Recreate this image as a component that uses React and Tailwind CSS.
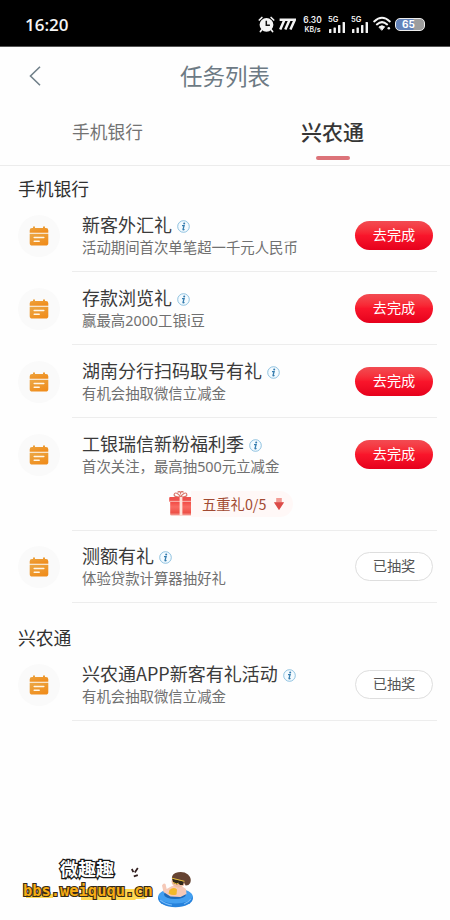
import React from "react";

const MOBILE_TASKS = [
  { title: "新客外汇礼", desc: "活动期间首次单笔超一千元人民币", done: false },
  { title: "存款浏览礼", desc: "赢最高2000工银i豆", done: false },
  { title: "湖南分行扫码取号有礼", desc: "有机会抽取微信立减金", done: false },
  { title: "工银瑞信新粉福利季", desc: "首次关注，最高抽500元立减金", done: false, gift: true },
  { title: "测额有礼", desc: "体验贷款计算器抽好礼", done: true },
];

const XNT_TASKS = [{ title: "兴农通APP新客有礼活动", desc: "有机会抽取微信立减金", done: true }];

function Signal() {
  return (
    <div className="flex h-[17px] w-[18px] flex-col">
      <span className="h-[6px] text-[7.5px] font-semibold leading-[8px]">5G</span>
      <svg className="h-[11px] w-[18px]" viewBox="0 0 18 11" fill="#f4f4f4">
        <rect x="1" y="7" width="2.4" height="4" rx="0.6" />
        <rect x="5.5" y="5.5" width="2.4" height="5.5" rx="0.6" />
        <rect x="10" y="3" width="2.4" height="8" rx="0.6" />
        <rect x="14.6" y="0" width="2.4" height="11" rx="0.6" />
      </svg>
    </div>
  );
}

function StatusBar() {
  return (
    <div className="flex h-[47px] items-center justify-between border-b border-[#555] bg-black pl-[25px] pr-[25px] pt-[2px] font-['Inter','Liberation_Sans',sans-serif] text-[#f4f4f4]">
      <span className="font-['Open_Sans','Liberation_Sans',sans-serif] text-[17px] font-semibold leading-none">16:20</span>
      <div className="flex items-center">
        <svg className="h-[17px] w-[17px]" viewBox="0 0 17 17">
          <circle cx="8.5" cy="8.8" r="6.9" fill="#f4f4f4" />
          <path d="M1.3 4 3.9 1.5M15.7 4 13.1 1.5M3.6 14 2.4 15.6M13.4 14 14.6 15.6" stroke="#f4f4f4" strokeWidth="1.7" strokeLinecap="round" />
          <path d="M8.3 4.8v4.4h3.6" stroke="#111" strokeWidth="1.5" fill="none" />
        </svg>
        <svg className="ml-[3px] h-[12px] w-[18px]" viewBox="0 0 18 12" fill="none" stroke="#f4f4f4" strokeWidth="2.5">
          <path d="M1.6 1.8H16.8L12.4 11.5M6.5 1.8 2.2 11.5M11.6 1.8 7.3 11.5" />
        </svg>
        <div className="ml-[6px] flex w-[21px] flex-col items-center font-semibold">
          <span className="text-[8.4px] leading-[10px]">6.30</span>
          <span className="text-[7px] leading-[9px]">KB/s</span>
        </div>
        <div className="ml-[5px] flex gap-[5px]">
          <Signal />
          <Signal />
        </div>
        <svg className="ml-[4px] h-[16px] w-[18px]" viewBox="0 0 18 16" fill="none" stroke="#f4f4f4" strokeWidth="2" strokeLinecap="round">
          <path d="M1.2 5.4Q9-2 16.8 5.4M3.9 8.4Q9 3.8 14.1 8.4" />
          <path d="M6.2 10.8Q9 8.6 11.6 10.8L9 14Z" fill="#f4f4f4" strokeWidth="1" />
          <circle cx="15.8" cy="12.2" r="1.3" fill="#f4f4f4" stroke="none" />
        </svg>
        <div className="ml-[4px] flex h-[13px] w-[30px] items-center justify-center rounded-[5px] border-[1.5px] border-[#ececec] bg-gradient-to-r from-[#6282b9] from-60% to-[#9d9d9d] to-65% pr-[3px] text-[10px] font-bold leading-none text-white">
          65
        </div>
      </div>
    </div>
  );
}

function InfoIcon() {
  return (
    <svg className="ml-[5px] mt-[4px] h-[13px] w-[13px]" viewBox="0 0 13 13">
      <circle cx="6.5" cy="6.5" r="5.8" fill="#f4fbff" stroke="#82bbdc" strokeWidth="0.9" />
      <circle cx="7.2" cy="3.4" r="1" fill="#347cae" />
      <path d="M5 5.6h2.1L6 9.4q0 .8 1.5 0" fill="none" stroke="#347cae" strokeWidth="1.3" />
    </svg>
  );
}

function CalendarIcon() {
  return (
    <div className="flex h-[42px] w-[42px] shrink-0 items-center justify-center rounded-full bg-[#fafafa]">
      <svg className="h-[20px] w-[20px]" viewBox="0 0 20 20">
        <defs>
          <linearGradient id="calendar" x1="0" y1="0" x2="0.6" y2="1">
            <stop offset="0" stopColor="#eba746" />
            <stop offset="1" stopColor="#f08d1c" />
          </linearGradient>
        </defs>
        <path d="M.7 6.8V4.2Q.7 2 3 2h1V1.3a1 1 0 0 1 2 0V2h8v-.7a1 1 0 0 1 2 0V2h1q2.3 0 2.3 2.2v2.6Z" fill="url(#calendar)" />
        <path d="M.7 7.8h18.6V17q0 2.6-2.6 2.6H3.3Q.7 19.6.7 17Z" fill="url(#calendar)" />
        <path d="M5.2 11.6h9.6M5.2 15.2h5" stroke="#fff6e6" strokeWidth="1.5" strokeLinecap="round" />
      </svg>
    </div>
  );
}

function GiftProgress() {
  return (
    <div className="ml-[86px] flex h-[28px] w-[125px] items-center">
      <svg className="h-[26px] w-[26px] shrink-0" viewBox="0 0 26 26">
        <defs>
          <linearGradient id="gift" x1="0" y1="0" x2="0" y2="1">
            <stop offset="0" stopColor="#f0453f" />
            <stop offset="0.4" stopColor="#f96b62" />
            <stop offset="0.8" stopColor="#ee5148" />
            <stop offset="1" stopColor="#f5a79d" />
          </linearGradient>
        </defs>
        <path d="M12.5 6Q5.5 6 6.2 3.4 7 .8 10 3q1.8 1.2 2.5 3 .9-1.8 2.7-3 3-2.2 3.6.4.7 2.6-6.3 2.6M9.5 1.4Q12-.6 12.6 2q.8-2.6 3-.6" fill="none" stroke="#d9786c" strokeWidth="1.2" />
        <rect x="2.2" y="10" width="21.6" height="14.5" rx="1" fill="url(#gift)" />
        <rect x="1.2" y="6" width="23.6" height="5" rx="1" fill="#ee514c" />
        <rect x="1.2" y="9.8" width="23.6" height="1.2" fill="#f8aaa2" />
        <rect x="11.6" y="6" width="2.8" height="18.5" fill="#ffe3da" />
      </svg>
      <div className="ml-[-3px] flex h-[26px] flex-1 items-center rounded-r-full bg-[#fff8f7] pl-[11px] text-[14.3px] leading-none text-[#a24a32]">
        <span className="whitespace-nowrap">五重礼0/5</span>
        <svg className="ml-[8px] h-[12px] w-[10px] shrink-0" viewBox="0 0 10 12">
          <path d="M2.2 0h5.6v4.5H10L5 12 0 4.5h2.2Z" fill="#f29a93" />
          <path d="M0 4.2h10L5 12Z" fill="#dc4b48" />
        </svg>
      </div>
    </div>
  );
}

function ActionButton({ done }) {
  return done ? (
    <button className="h-[29px] w-[78px] shrink-0 rounded-full border border-[#dedede] bg-white pb-[3px] text-[14.2px] leading-none text-[#555]">已抽奖</button>
  ) : (
    <button className="h-[29px] w-[78px] shrink-0 rounded-full bg-gradient-to-b from-[#f24b52] via-[#f9152b] to-[#e6001c] pb-[3px] text-[14.2px] leading-none text-white">去完成</button>
  );
}

function TaskRow({ task }) {
  return (
    <div className="flex pl-[18px] pr-[13px]">
      <div className={`flex items-center ${task.done ? "h-[71px]" : "h-[73px]"}`}>
        <CalendarIcon />
      </div>
      <div className={`ml-[12px] flex-1 border-b border-[#ededed] pl-[10px] ${task.gift ? "h-[113px]" : task.done ? "h-[72px]" : "h-[73px]"}`}>
        <div className={`flex items-center justify-between pr-[4px] ${task.done ? "h-[71px]" : "h-[73px]"}`}>
          <div className="pb-[2px]">
            <div className="flex h-[23px] items-center whitespace-nowrap text-[18px] leading-[23px] text-[#3a3a3a]">
              {task.title}
              <InfoIcon />
            </div>
            <div className="h-[21px] whitespace-nowrap font-['Noto_Sans','Noto_Sans_CJK_SC',sans-serif] text-[14.4px] leading-[23px] text-[#707070]">{task.desc}</div>
          </div>
          <ActionButton done={task.done} />
        </div>
        {task.gift && (
          <div className="-mt-[1px]">
            <GiftProgress />
          </div>
        )}
      </div>
    </div>
  );
}

function Watermark() {
  return (
    <div className="mt-auto flex h-[68px] items-start pl-[23px] pt-[6px]">
      <div className="w-[130px]">
        <div className="flex h-[20px] items-center pl-[37px]">
          <span className="text-[18px] font-bold leading-[20px] text-white [-webkit-text-stroke:2.5px_#171717] [paint-order:stroke_fill]">微趣趣</span>
          <svg className="ml-[17px] mt-[8px] h-[11px] w-[9px]" viewBox="0 0 9 11" fill="none" stroke="#332020" strokeWidth="1.8">
            <path d="M.8 2 2.4 5.2M6.8 1 3.8 5.4M2.8 9.4 6.8 8.2" />
          </svg>
        </div>
        <div className="mt-[2px] h-[24px] whitespace-nowrap bg-[linear-gradient(#ffda55,#ffda55),linear-gradient(174deg,#ffda55_90%,transparent_91%)] bg-[length:27px_4px,66px_11px] bg-[position:3px_14px,58px_9px] bg-no-repeat font-['DejaVu_Sans_Mono',monospace] text-[15.4px] font-bold leading-[22px] text-[#f6ac14] [-webkit-text-stroke:2.2px_#332a18] [paint-order:stroke_fill]">
          bbs.weiququ.cn
        </div>
      </div>
      <svg className="ml-[4px] mt-[12px] h-[38px] w-[38px]" viewBox="0 0 38 38">
        <ellipse cx="18.5" cy="28" rx="17.5" ry="9.3" fill="#2682dc" />
        <ellipse cx="18.5" cy="26" rx="17" ry="7.6" fill="#439ff0" />
        <ellipse cx="18" cy="24.5" rx="11" ry="4.6" fill="#1c69b9" />
        <path d="M5 15.5q1.5-3 3.5-1.5l1.2 5 5.3-3 8-1 6 4 .5 5-6 3-10-.5-7-4.5Z" fill="#f5c9b8" />
        <path d="M12.5 20q4-3.5 7.5-.5l-.5 5q-4 1.5-8-1Z" fill="#f1b82a" />
        <ellipse cx="21.5" cy="11.5" rx="7" ry="6" fill="#f0bda3" />
        <path d="M14.8 8.2Q15 3 21 2.2q6-1 10 2.2 4 4 2.2 8.6-1.4 2.7-4.6 2.6l-2-4.4Z" fill="#654332" />
        <path d="M15 8.4 27 11.5l-1 3.5h-3l-1.4-1.6-1.6 1-3.7-1.4Z" fill="#30281b" />
        <path d="M15 8.2 27.5 11.3M16 12.4l3.6 1.5 1.8-.8" fill="none" stroke="#e4bb38" strokeWidth="1" />
        <path d="M3 30q5 4 12 5M27 34q5-2 7-5" fill="none" stroke="#72b8f8" strokeWidth="1.1" />
      </svg>
    </div>
  );
}

export default function App() {
  return (
    <div className="flex h-[920px] w-[450px] flex-col overflow-hidden bg-[#fefefe] font-['Noto_Sans_CJK_SC',sans-serif]">
      <StatusBar />
      <header className="grid h-[58px] grid-cols-[60px_1fr_60px] items-center">
        <svg className="ml-[29px] h-[20px] w-[12px]" viewBox="0 0 12 20" fill="none" stroke="#71808a" strokeWidth="1.6">
          <path d="M11 .8 1.5 10 11 19.2" />
        </svg>
        <h1 className="pb-[2px] text-center text-[22.5px] leading-[30px] text-[#6d7a84]">任务列表</h1>
      </header>
      <nav className="flex h-[61px] border-b border-[#ececec]">
        <div className="flex h-[53px] w-[215px] items-center justify-center text-[17.7px] text-[#737373]">手机银行</div>
        <div className="flex w-[235px] flex-col items-center">
          <span className="h-[51px] text-[21px] font-medium leading-[53px] text-[#363636]">兴农通</span>
          <span className="h-[4px] w-[34px] rounded-full bg-[#dc7379]" />
        </div>
      </nav>
      <section>
        <h2 className="h-[33px] pl-[18px] pt-[9px] text-[17.8px] leading-[26px] text-[#303030]">手机银行</h2>
        {MOBILE_TASKS.map((task) => (
          <TaskRow key={task.title} task={task} />
        ))}
      </section>
      <section>
        <h2 className="h-[46px] pl-[18px] pt-[21px] text-[17.8px] leading-[26px] text-[#303030]">兴农通</h2>
        {XNT_TASKS.map((task) => (
          <TaskRow key={task.title} task={task} />
        ))}
      </section>
      <Watermark />
    </div>
  );
}
